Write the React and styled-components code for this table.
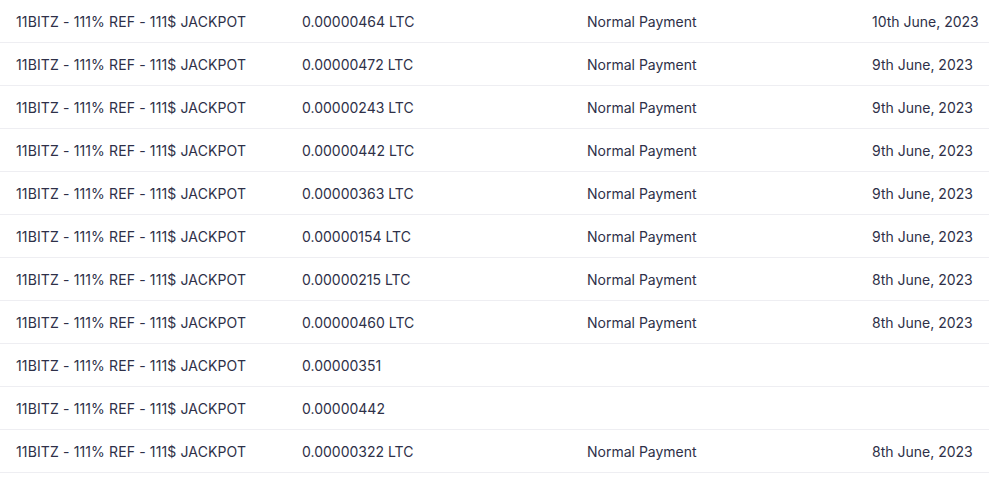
import styled, { createGlobalStyle } from "styled-components"

const GlobalStyle = createGlobalStyle`
  html, body {
    margin: 0;
    padding: 0;
    background: #ffffff;
  }
  body {
    font-family: Inter, "Noto Sans", sans-serif;
  }
`

const rows = [
  { amount: "0.00000464 LTC", type: "Normal Payment", date: "10th June, 2023" },
  { amount: "0.00000472 LTC", type: "Normal Payment", date: "9th June, 2023" },
  { amount: "0.00000243 LTC", type: "Normal Payment", date: "9th June, 2023" },
  { amount: "0.00000442 LTC", type: "Normal Payment", date: "9th June, 2023" },
  { amount: "0.00000363 LTC", type: "Normal Payment", date: "9th June, 2023" },
  { amount: "0.00000154 LTC", type: "Normal Payment", date: "9th June, 2023" },
  { amount: "0.00000215 LTC", type: "Normal Payment", date: "8th June, 2023" },
  { amount: "0.00000460 LTC", type: "Normal Payment", date: "8th June, 2023" },
  { amount: "0.00000351", type: "", date: "" },
  { amount: "0.00000442", type: "", date: "" },
  { amount: "0.00000322 LTC", type: "Normal Payment", date: "8th June, 2023" },
]

const Table = styled.div`
  display: flex;
  flex-direction: column;
  width: 989px;
`

const Row = styled.div`
  display: grid;
  grid-template-columns: 286px 285px 285px 1fr;
  height: 42px;
  align-items: center;
  border-bottom: 1px solid #eeeef2;
`

const Cell = styled.div`
  padding: 2px 16px 0;
  font-size: 14px;
  line-height: 20px;
  color: #2e3048;
  white-space: nowrap;
  letter-spacing: ${(p) => p.$spacing || "0"};
`

export default function App() {
  return (
    <>
      <GlobalStyle />
      <Table>
        {rows.map((r, i) => (
          <Row key={i}>
            <Cell $spacing="0.13px">11BITZ - 111% REF - 111$ JACKPOT</Cell>
            <Cell>{r.amount}</Cell>
            <Cell>{r.type}</Cell>
            <Cell>{r.date}</Cell>
          </Row>
        ))}
      </Table>
    </>
  )
}
